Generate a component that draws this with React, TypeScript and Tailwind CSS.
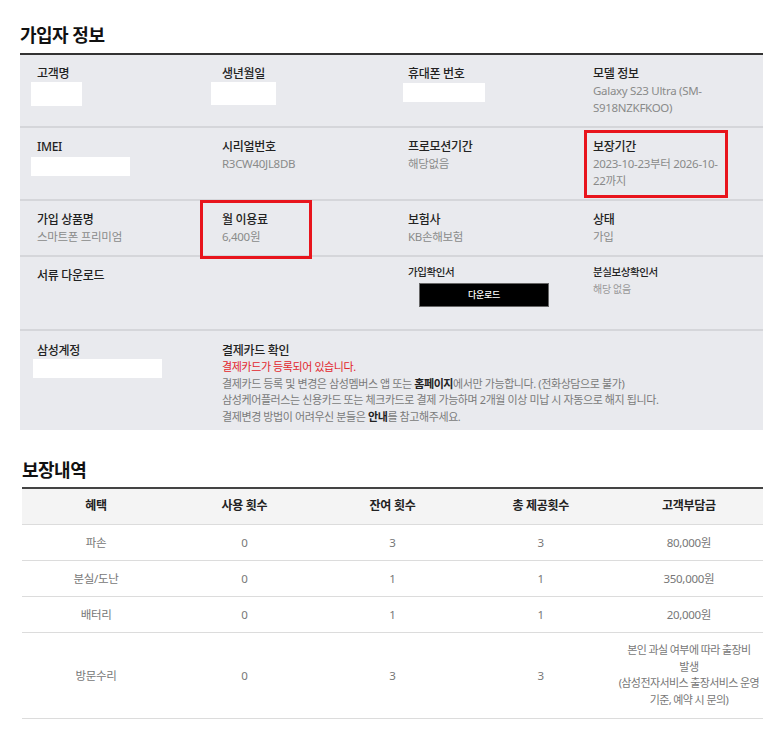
import React from 'react';

const Redact: React.FC<{ className: string }> = ({ className }) => (
  <div className={`bg-white ${className}`} />
);

const Label: React.FC<{ children: React.ReactNode }> = ({ children }) => (
  <div className="text-[12px] leading-[17px] font-medium text-[#222] tracking-[-0.3px]">{children}</div>
);

const Value: React.FC<{ children: React.ReactNode }> = ({ children }) => (
  <div className="text-[11.5px] leading-[17px] text-[#8a8a8a] tracking-[-0.3px]">{children}</div>
);

const Highlight: React.FC<{ className: string }> = ({ className }) => (
  <div className={`absolute border-[3px] border-[#e8141c] pointer-events-none ${className}`} />
);

const rows = [
  ['파손', '0', '3', '3', '80,000원'],
  ['분실/도난', '0', '1', '1', '350,000원'],
  ['배터리', '0', '1', '1', '20,000원'],
];

export default function App() {
  return (
    <div className="min-h-screen bg-white pl-[20px] pr-[13px] pt-[22px] font-['Noto_Sans','Noto_Sans_CJK_KR',sans-serif]">
      <h2 className="text-[18px] leading-[26px] font-bold text-[#111] tracking-[-0.5px]">가입자 정보</h2>

      <div className="mt-[5px] border-t-2 border-[#333] bg-[#e9eaee]">
        {/* row 1 */}
        <div className="grid grid-cols-[185px_186px_185px_140px] pl-[17px] border-b-2 border-[#d5d6da]">
          <div className="py-[10px]">
            <Label>고객명</Label>
            <Redact className="-ml-[6px] w-[51px] h-[24px]" />
          </div>
          <div className="py-[10px]">
            <Label>생년월일</Label>
            <Redact className="-ml-[11px] w-[65px] h-[23px]" />
          </div>
          <div className="py-[10px]">
            <Label>휴대폰 번호</Label>
            <Redact className="-ml-[5px] mt-[1px] w-[82px] h-[19px]" />
          </div>
          <div className="py-[10px]">
            <Label>모델 정보</Label>
            <Value>Galaxy S23 Ultra (SM-<br />S918NZKFKOO)</Value>
          </div>
        </div>

        {/* row 2 */}
        <div className="grid grid-cols-[185px_186px_185px_140px] pl-[17px] border-b-2 border-[#d5d6da]">
          <div className="py-[10px]">
            <Label>IMEI</Label>
            <Redact className="-ml-[6px] mt-[2px] w-[99px] h-[19px]" />
          </div>
          <div className="py-[10px]">
            <Label>시리얼번호</Label>
            <Value>R3CW40JL8DB</Value>
          </div>
          <div className="py-[10px]">
            <Label>프로모션기간</Label>
            <Value>해당없음</Value>
          </div>
          <div className="relative py-[10px]">
            <Highlight className="-left-[9px] top-[2px] w-[144px] h-[68px]" />
            <Label>보장기간</Label>
            <Value>2023-10-23부터 2026-10-<br />22까지</Value>
          </div>
        </div>

        {/* row 3 */}
        <div className="grid grid-cols-[185px_186px_185px_140px] pl-[17px] border-b-2 border-[#d5d6da]">
          <div className="py-[10px]">
            <Label>가입 상품명</Label>
            <Value>스마트폰 프리미엄</Value>
          </div>
          <div className="relative py-[10px]">
            <Highlight className="-left-[22px] -top-[1px] w-[112px] h-[59px]" />
            <Label>월 이용료</Label>
            <Value>6,400원</Value>
          </div>
          <div className="py-[10px]">
            <Label>보험사</Label>
            <Value>KB손해보험</Value>
          </div>
          <div className="py-[10px]">
            <Label>상태</Label>
            <Value>가입</Value>
          </div>
        </div>

        {/* row 4 */}
        <div className="grid grid-cols-[185px_186px_185px_140px] pl-[17px] h-[74px] border-b-2 border-[#d5d6da]">
          <div className="py-[10px]">
            <Label>서류 다운로드</Label>
          </div>
          <div />
          <div className="pt-[8px]">
            <div className="text-[10.5px] leading-[15px] font-medium text-[#222] tracking-[-0.4px]">가입확인서</div>
            <button className="ml-[11px] mt-[1px] w-[130px] h-[24px] bg-black border border-[#666] text-white text-[9px] font-medium tracking-[-0.3px]">
              다운로드
            </button>
          </div>
          <div className="pt-[8px]">
            <div className="text-[10.5px] leading-[15px] font-medium text-[#222] tracking-[-0.4px]">분실보상확인서</div>
            <div className="mt-[2px] text-[10px] leading-[14px] text-[#999] tracking-[-0.3px]">해당 없음</div>
          </div>
        </div>

        {/* row 5 */}
        <div className="grid grid-cols-[185px_1fr] pl-[17px] pt-[11px] pb-[4px]">
          <div>
            <Label>삼성계정</Label>
            <Redact className="-ml-[4px] w-[129px] h-[19px]" />
          </div>
          <div className="text-[11px] leading-[16.7px] tracking-[-0.4px]">
            <Label>결제카드 확인</Label>
            <div className="text-[#e2262c]">결제카드가 등록되어 있습니다.</div>
            <div className="text-[#7a7a7a]">
              결제카드 등록 및 변경은 삼성멤버스 앱 또는 <b className="font-semibold text-[#222]">홈페이지</b>에서만 가능합니다. (전화상담으로 불가)
            </div>
            <div className="text-[#7a7a7a]">
              삼성케어플러스는 신용카드 또는 체크카드로 결제 가능하며 2개월 이상 미납 시 자동으로 해지 됩니다.
            </div>
            <div className="text-[#7a7a7a]">
              결제변경 방법이 어려우신 분들은 <b className="font-semibold text-[#222]">안내</b>를 참고해주세요.
            </div>
          </div>
        </div>
      </div>

      <div className="ml-[2px]">
        <h2 className="mt-[27px] text-[18px] leading-[26px] font-bold text-[#111] tracking-[-0.5px]">보장내역</h2>
        <div className="mt-[4px] border-t-2 border-[#444]">
          <div className="grid grid-cols-5 h-[36px] items-center bg-[#f4f4f4] border-b border-[#dcdcdc] text-center text-[12px] font-semibold text-[#222] tracking-[-0.3px]">
            <div>혜택</div>
            <div>사용 횟수</div>
            <div>잔여 횟수</div>
            <div>총 제공횟수</div>
            <div>고객부담금</div>
          </div>
          {rows.map((r) => (
            <div key={r[0]} className="grid grid-cols-5 h-[36px] items-center border-b border-[#dcdcdc] text-center text-[11.5px] text-[#777] tracking-[-0.3px]">
              {r.map((c, i) => (
                <div key={i}>{c}</div>
              ))}
            </div>
          ))}
          <div className="grid grid-cols-5 h-[86px] items-center border-b border-[#dcdcdc] text-center text-[11.5px] text-[#777] tracking-[-0.3px]">
            <div>방문수리</div>
            <div>0</div>
            <div>3</div>
            <div>3</div>
            <div className="text-[11px] leading-[16.5px] tracking-[-0.6px] whitespace-nowrap">
              본인 과실 여부에 따라 출장비<br />
              발생<br />
              (삼성전자서비스 출장서비스 운영<br />
              기준, 예약 시 문의)
            </div>
          </div>
        </div>
      </div>
    </div>
  );
}
